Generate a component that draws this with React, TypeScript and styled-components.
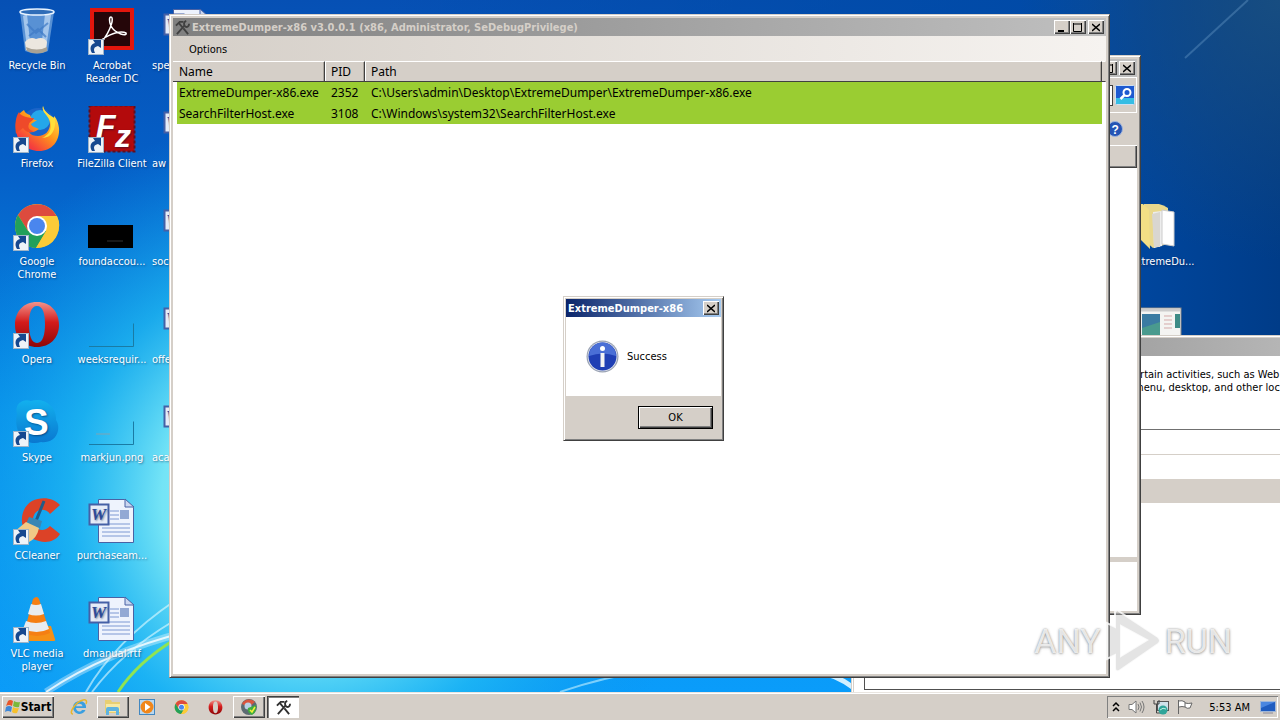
import React from 'react';
import styled, { createGlobalStyle, css } from 'styled-components';

const face = '#d5cfc8';
const ui = `"DejaVu Sans Condensed", "DejaVu Sans", sans-serif`;
const listFont = `"Noto Sans", "Open Sans", sans-serif`;

const GlobalStyle = createGlobalStyle`
  *, *::before, *::after { box-sizing: border-box; }
  body { margin: 0; font: 11px/13px ${ui}; color: #000; background: #0a62c4; }
  button { font: inherit; color: inherit; padding: 0; border: 0; background: none; }
  h1, h2, p { margin: 0; font: inherit; }
`;

const raised = css`
  background: ${face};
  box-shadow: inset 1px 1px #fff, inset -1px -1px #404040, inset -2px -2px #808080;
`;
const sunken = css`
  box-shadow: inset 1px 1px #808080, inset -1px -1px #fff;
`;

const Screen = styled.div`
  display: flex;
  flex-direction: column;
  height: 100vh;
  min-height: 480px;
  overflow: hidden;
  position: relative;
`;
const Desktop = styled.main`
  flex: 1;
  position: relative;
  overflow: hidden;
`;
const Wallpaper = styled.svg`
  position: absolute;
  inset: 0;
  width: 100%;
  height: 100%;
`;
const IconGrid = styled.div`
  position: relative;
  display: grid;
  grid-template-columns: repeat(17, 74px);
  grid-template-rows: repeat(7, 98px);
  column-gap: 1px;
  padding-top: 8px;
`;
const Shortcut = styled.button<{ $col: number; $row: number; $clipped?: boolean }>`
  grid-column: ${p => p.$col};
  grid-row: ${p => p.$row};
  display: flex;
  flex-direction: column;
  align-items: center;
  gap: 3px;
  color: #fff;
  text-shadow: 1px 1px 2px rgba(0, 20, 60, 0.5);
  span {
    max-width: 74px;
    ${p => p.$clipped && 'width: 70px; text-align: left;'}
  }
  svg { display: block; flex: none; }
`;

const Win = styled.section<{ $x: number; $y: number; $w: number; $h: number }>`
  position: absolute;
  left: ${p => p.$x}px;
  right: auto;
  top: ${p => p.$y}px;
  width: ${p => p.$w}px;
  height: ${p => p.$h}px;
  margin: 0;
  display: flex;
  flex-direction: column;
  background: ${face};
  border: 1px solid;
  border-color: ${face} #404040 #404040 ${face};
  box-shadow: inset 1px 1px #fff, inset -1px -1px #808080;
`;
const MainWin = styled(Win)`padding: 3px;`;
const DialogWin = styled(Win)`padding: 2px;`;
const TitleBar = styled.header<{ $active?: boolean }>`
  display: flex;
  align-items: center;
  flex: none;
  height: 18px;
  padding: 0 2px;
  gap: 2px;
  font-weight: bold;
  white-space: nowrap;
  color: ${p => (p.$active ? '#fff' : face)};
  background: linear-gradient(90deg, ${p => (p.$active ? '#0a246a, #a6caf0' : '#808080, #c0c0c0')});
  h1 { flex: 1; font-weight: bold; }
`;
const TitleButtons = styled.div`display: flex;`;
const TitleButton = styled.button<{ $gap?: boolean }>`
  ${raised}
  width: 16px;
  height: 14px;
  margin-left: ${p => (p.$gap ? 2 : 0)}px;
  svg { display: block; margin: 2px auto; }
`;
const MenuBar = styled.nav`
  display: flex;
  align-items: center;
  flex: none;
  height: 25px;
  padding: 2px 16px 0;
  background: linear-gradient(90deg, ${face}, #f6f3f0);
`;
const ListArea = styled.div`
  flex: 1;
  background: #fff;
`;
const ProcessTable = styled.table`
  width: 100%;
  table-layout: fixed;
  border-spacing: 0;
  font: 12px/19px ${listFont};
  white-space: nowrap;
  th {
    height: 21px;
    padding: 0 6px;
    text-align: left;
    font-weight: normal;
    background: ${face};
    border: 1px solid;
    border-color: #fff #404040 #404040 #fff;
    border-left-width: 0;
  }
  th:first-child { box-shadow: inset -1px 0 #aaa49c; }
  th:nth-child(n + 2) { box-shadow: inset 1px 0 #fff, inset -1px 0 #aaa49c; }
  th:last-child { padding: 0; border-right-color: ${face}; box-shadow: none; }
  td {
    height: 21px;
    padding: 0 6px;
    background: #9acd32;
  }
  td:first-child { padding-left: 2px; border-left: 4px solid #fff; }
  td:last-child { background: #fff; padding: 0; }
`;

const MessageBody = styled.div`
  display: flex;
  align-items: center;
  gap: 8px;
  flex: 1;
  padding: 0 20px;
  background: #fff;
`;
const ButtonRow = styled.footer`
  display: flex;
  justify-content: flex-end;
  padding: 10px 8px 9px;
`;
const OkButton = styled.button`
  width: 75px;
  height: 23px;
  background: ${face};
  border: 1px solid #000;
  box-shadow: inset 1px 1px #fff, inset -1px -1px #404040, inset -2px -2px #808080;
`;

const SearchRow = styled.div`
  display: flex;
  justify-content: flex-end;
  align-items: center;
  flex: none;
  height: 36px;
  padding: 0 1px;
  gap: 2px;
  border: 1px solid #fff;
  input { width: 200px; height: 21px; border: 1px solid #404040; background: #fff; }
`;
const SearchButton = styled.button`
  width: 20px;
  height: 20px;
  svg { display: block; }
`;
const CommandRow = styled.div`
  display: flex;
  justify-content: flex-end;
  align-items: center;
  flex: none;
  height: 32px;
  padding: 0 14px;
`;
const ColumnStrip = styled.div`
  ${raised}
  flex: none;
  height: 23px;
`;
const FilePane = styled.div`
  flex: 1;
  background: #fff;
`;
const DetailsPane = styled.div`
  flex: none;
  height: 54px;
  border-top: 5px solid ${face};
  background: #fff;
`;

const SheetText = styled.p`
  flex: none;
  height: 74px;
  padding: 12px 8px 0 280px;
  white-space: nowrap;
  background: #fff;
  border-bottom: 1px solid #707070;
`;
const SheetRow = styled.div`
  flex: none;
  height: 25px;
  background: #fff;
  border-bottom: 1px solid ${face};
`;
const SheetBand = styled.div`
  flex: none;
  height: 22px;
  background: ${face};
`;
const SheetList = styled.div`
  flex: none;
  height: 190px;
  padding: 0 0 2px 10px;
  background: #fff;
  div { height: 100%; border: 1px solid #505050; border-top-color: ${face}; }
`;

const Watermark = styled.div`
  position: absolute;
  right: 48px;
  bottom: 47px;
  display: flex;
  align-items: center;
  gap: 4px;
  pointer-events: none;
  font: 34px/64px Roboto, "DejaVu Sans Condensed", sans-serif;
  color: rgba(255, 255, 255, 0.8);
  text-shadow: 0 0 2px rgba(90, 90, 90, 0.6), 0 1px 3px rgba(90, 90, 90, 0.4);
  svg { display: block; }
`;

const Taskbar = styled.footer`
  position: relative;
  display: flex;
  align-items: center;
  flex: none;
  height: 28px;
  padding: 2px 2px 0;
  background: ${face};
  box-shadow: inset 0 1px #e9e5e0, inset 0 2px #fff;
`;
const StartButton = styled.button`
  ${raised}
  display: flex;
  align-items: center;
  justify-content: center;
  width: 52px;
  height: 22px;
  font-size: 12px;
  font-weight: bold;
`;
const TaskButtons = styled.div`
  display: flex;
  flex: 1;
  gap: 2px;
  padding-left: 9px;
`;
const TaskButton = styled.button<{ $state?: 'open' | 'active' }>`
  display: flex;
  align-items: center;
  justify-content: center;
  width: 32px;
  height: 22px;
  ${p => p.$state === 'open' && raised}
  ${p => p.$state === 'active' && css`
    background: #fff;
    box-shadow: inset 1px 1px #404040, inset 2px 2px #808080, inset -1px -1px #fff;
  `}
`;
const Tray = styled.div`
  ${sunken}
  display: flex;
  align-items: center;
  height: 22px;
  padding: 0 2px 0 5px;
  gap: 8px;
  svg { display: block; }
  time { margin: 0 2px 0 8px; }
`;

/* ---------- icons ---------- */

const Badge = () => (
  <g>
    <rect x="0.5" y="31.5" width="15" height="15" fill="#eef3f8" stroke="#9fb4c8" />
    <path d="M4 45c-3-5-1-9 3-10l-2-3h8v8l-3-2c-4 1-5 3-3 7z" fill="#16488f" />
  </g>
);
const Ico = ({ children, badge }: { children?: React.ReactNode; badge?: boolean }) => (
  <svg width="48" height="48" viewBox="0 0 48 48" aria-hidden="true">
    {children}
    {badge && <Badge />}
  </svg>
);
const BinIcon = () => (
  <Ico>
    <path d="M7 4 12 43q12 5 23 0L41 4z" fill="#9cc4ec" opacity=".55" />
    <path d="M10 8 14 40l4 2-4-36zM38 7l-5 33-5 2 4-36z" fill="#e4f2ff" opacity=".55" />
    <path d="m14 16 9 9 12-10M16 28l9-7 8 8" stroke="#3d79c4" fill="none" opacity=".7" strokeWidth="2" />
    <path d="M12 34q5-6 11-3 8-3 11 3l-1 8q-10 5-20 0z" fill="#ece7df" />
    <path d="M13 39q11 5 21 0v4q-10 5-20 0z" fill="#a9a294" />
    <ellipse cx="24" cy="4" rx="17" ry="3" fill="#2f6db8" stroke="#e9f4ff" strokeWidth="1.5" />
  </Ico>
);
const AcrobatIcon = () => (
  <Ico badge>
    <rect x="2" y="0" width="44" height="42" fill="#e2160d" />
    <rect x="6" y="4" width="36" height="34" fill="#250609" />
    <path d="M12 36c-2-5 19-15 26-11 2 4-11 1-15-7-2-5-2-9 0-9 3 0 1 12-10 26z" fill="none" stroke="#fff" strokeWidth="1.5" />
  </Ico>
);
const FirefoxIcon = () => (
  <Ico badge>
    <defs>
      <linearGradient id="fx" x1="0.9" y1="0" x2="0.1" y2="1">
        <stop offset="0" stopColor="#fff25a" /><stop offset=".45" stopColor="#ff9a1a" />
        <stop offset=".8" stopColor="#f5403c" /><stop offset="1" stopColor="#e12557" />
      </linearGradient>
    </defs>
    <circle cx="25" cy="19" r="17" fill="#1b64c8" />
    <circle cx="27" cy="14" r="10" fill="#24a7ea" />
    <path d="M30 0c-2 7 7 9 7 18 0 7-5 12-12 12-4 0-7-1-9-4 4 1 7-1 10-3-3-2-6-1-8-5l6-4c-3 0-6-1-7-5-3-1-5-2-6-5C4 8 2 15 3 24c1 12 11 21 23 21 13 0 21-10 20-23-1-7-3-10-5-12v6C39 9 31 7 30 0z" fill="url(#fx)" />
    <path d="M6 6c1 3 4 4 7 5l5 1h3c-1 3-5 4-5 6-2 4 1 7 5 7-5 3-9 0-11-3-2 2-5 3-7 6-1-8-1-16 3-22z" fill="#ee4a2a" />
    <path d="M30 0c-2 7 8 10 8 19 0 7-4 11-9 13 10 0 14-9 13-19-3-4-11-5-12-13z" fill="#ffe03a" />
  </Ico>
);
const FileZillaIcon = () => (
  <Ico badge>
    <rect x="1.5" y="-0.5" width="45" height="46" fill="#b30a0c" stroke="#5f1020" strokeWidth="2" strokeDasharray="3 2" />
    <text x="8" y="31" fontFamily="Liberation Sans" fontWeight="bold" fontStyle="italic" fontSize="32" fill="#fff">F</text>
    <text x="27" y="41" fontFamily="Liberation Sans" fontWeight="bold" fontStyle="italic" fontSize="32" fill="#fff">z</text>
  </Ico>
);
const ChromeShape = () => (
  <g>
    <circle cx="24" cy="22" r="22" fill="#fbc932" />
    <path d="M5 11a22 22 0 0 1 38.500 1H24L15 27z" fill="#dd4b3e" />
    <path d="M5 11a22 22 0 0 0 18 33l10-17-18 0z" fill="#22a05a" />
    <path d="M24 12h20q5 10-1 21t-20 11l11-18z" fill="#fbcb38" />
    <circle cx="24" cy="22" r="10" fill="#fff" />
    <circle cx="24" cy="22" r="8" fill="#4a86ee" />
  </g>
);
const ChromeIcon = () => <Ico badge><ChromeShape /></Ico>;
const OperaShape = () => (
  <g>
    <defs>
      <linearGradient id="op" x1="0" y1="0" x2="0" y2="1">
        <stop offset="0" stopColor="#f2938b" /><stop offset=".45" stopColor="#d31b1b" /><stop offset="1" stopColor="#8d0708" />
      </linearGradient>
    </defs>
    <path fillRule="evenodd" d="M24 0C10 0 2 10 2 23s9 22 22 22 22-9 22-22S38 0 24 0zm0 4c6 0 8 8 8 18s-2 19-8 19-8-9-8-19 2-18 8-18z" fill="url(#op)" />
  </g>
);
const OperaIcon = () => <Ico badge><OperaShape /></Ico>;
const SkypeIcon = () => (
  <Ico badge>
    <defs>
      <linearGradient id="sk" x1="0" y1="0" x2="0" y2="1">
        <stop offset="0" stopColor="#12b0ee" /><stop offset="1" stopColor="#0a78d0" />
      </linearGradient>
    </defs>
    <path d="M4 14C1 5 9-2 18 1 30-3 44 6 43 20c6 9 0 24-15 22C12 47 0 32 4 14z" fill="url(#sk)" />
    <text x="11" y="35" fontFamily="Liberation Sans" fontWeight="bold" fontSize="37" fill="#fff">S</text>
  </Ico>
);
const CCleanerIcon = () => (
  <Ico badge>
    <path d="M47 7 37 16C32 9 21 11 20 21s10 15 17 7l10 8c-5 8-14 9-21 7C5 38 4 12 19 3c10-5 22-3 28 4z" fill="#dc4227" />
    <path d="m31 3-8 20" stroke="#225b88" strokeWidth="3" />
    <path d="m16 19 13 4-2 7-14-4z" fill="#3a86b4" />
    <path d="M13 24 1 34l15 10q8-4 10-14z" fill="#f0c987" />
  </Ico>
);
const VlcIcon = () => (
  <Ico badge>
    <path d="m10 31-5 12q0 2 3 2h32q3 0 2-2l-4-13z" fill="#f59016" />
    <path d="M20 3q4-4 6 0l11 34q-13 6-26 0z" fill="#f57f13" />
    <path d="m18 8-3 10q8 3 16 0L28 8q-5 2-10 0zM13 25l-3 8q14 6 26 0l-3-8q-10 4-20 0z" fill="#e9ecef" />
  </Ico>
);
const WordIcon = () => (
  <Ico>
    <path d="M10.500 1.500h26l9 8v35h-35z" fill="#eef3fd" stroke="#4a62a4" />
    <path d="M37 1v8h9z" fill="#cbd7f0" stroke="#4a62a4" />
    <path d="M22 13h9M22 17h9M22 21h9M14 26h28M14 30h28M14 34h28M14 38h28" stroke="#7d98d2" />
    <rect x="32" y="12" width="9" height="9" fill="#93a9d4" />
    <rect x="1.500" y="6.500" width="19" height="20" fill="#e6ecf8" stroke="#4560a6" strokeWidth="2" />
    <text x="3" y="22" fontFamily="Liberation Serif" fontWeight="bold" fontStyle="italic" fontSize="17" fill="#2c4a98">W</text>
  </Ico>
);
const BlackThumb = () => (
  <Ico><rect y="21" width="45" height="23" fill="#000" /><path d="M19 37h16" stroke="#333" /></Ico>
);
const ClearThumb = ({ mark }: { mark?: boolean }) => (
  <Ico>
    <path d="M1 44.500h44.500v-23" fill="none" stroke="#1a7ba4" />
    {mark && <path d="M8 34h14" stroke="#7fa4b4" />}
  </Ico>
);
const FolderIcon = () => (
  <Ico>
    <path d="M6 0q13-3 24 4v36l-15 4-9-8z" fill="#e9d88c" />
    <path d="m15 8 9-1v35l-8 2z" fill="#ededed" />
    <path d="m14 10 8-2v35l-6 0z" fill="#d9d6d0" />
    <path d="m24 6 12 2v34l-12-2z" fill="#fff" stroke="#ccc" />
    <path d="m3-2 8 8 1 39-9-9z" fill="#f3df85" />
  </Ico>
);
const ExeIcon = () => (
  <Ico>
    <rect x="1" y="6" width="42" height="36" fill="#f4f4f2" stroke="#888" />
    <path d="M2 8h40" stroke="#ccc" strokeWidth="3" />
    <rect x="4" y="12" width="18" height="30" fill="#4a9a8e" />
    <path d="M4 12h18v8L4 26z" fill="#3b7ba2" />
    <path d="M26 14h8M26 18h8M26 22h8M26 26h8" stroke="#d4a9a9" />
    <rect x="37" y="12" width="5" height="14" fill="#3d8b86" />
  </Ico>
);

const ToolsIcon = ({ size, color }: { size: number; color: string }) => (
  <svg width={size} height={size} viewBox="0 0 16 16" fill="none" stroke={color} strokeWidth="2" aria-hidden="true">
    <path d="M1 6 5 2h4M4 3l4 5M9 9l5 6M2 15l8-9" />
    <path d="M12 1c-3 1-3 4-1 6 2 1 4 0 4-3" />
  </svg>
);
const MinGlyph = () => <svg width="8" height="9" aria-hidden="true"><path d="M0 8h6" stroke="#000" strokeWidth="2" /></svg>;
const MaxGlyph = () => <svg width="10" height="9" aria-hidden="true"><path d="M.5 0v8.500h8V0M0 1h9" fill="none" stroke="#000" /></svg>;
const CloseGlyph = () => <svg width="8" height="9" aria-hidden="true"><path d="m0 1 8 7m0-7L0 8" stroke="#000" strokeWidth="1.600" /></svg>;

const InfoIcon = () => (
  <svg width="33" height="33" viewBox="0 0 33 33" aria-hidden="true">
    <circle cx="16.500" cy="16.500" r="16" fill="#9aa3b4" />
    <circle cx="16.500" cy="16.500" r="14.800" fill="#e6e9f0" />
    <circle cx="16.500" cy="16.500" r="14" fill="#1f3fb4" />
    <path d="M3 16a13.500 13.500 0 0 1 27 0q-13-5-27 0z" fill="#4a6fd6" />
    <circle cx="16.500" cy="8.500" r="2.500" fill="#fff" />
    <rect x="14.500" y="13" width="4" height="14" fill="#f3f3f3" />
  </svg>
);
const SearchGlyph = () => (
  <svg width="20" height="20" viewBox="0 0 20 20" aria-hidden="true">
    <rect x=".5" y=".5" width="19" height="19" rx="1" fill="#1e5ad0" stroke="#cfe0f2" />
    <path d="M1 13h18v6H1z" fill="#35bde4" />
    <circle cx="12" cy="7.500" r="3.500" fill="none" stroke="#fff" strokeWidth="2" />
    <path d="m9.500 10-4 4" stroke="#fff" strokeWidth="2.500" />
  </svg>
);
const HelpIcon = () => (
  <svg width="16" height="16" viewBox="0 0 16 16" aria-hidden="true">
    <circle cx="8" cy="8" r="7.500" fill="#2454b4" stroke="#9db3dc" />
    <text x="4.500" y="12.500" fontFamily="Liberation Sans" fontWeight="bold" fontSize="12" fill="#fff">?</text>
  </svg>
);

const FlagLogo = () => (
  <svg width="16" height="16" viewBox="0 0 16 16" aria-hidden="true">
    <path d="M3 2q2-2 5 0L7 7Q4 5 1 7z" fill="#e8562a" />
    <path d="M9 2q3 2 6 1l-1 5q-3 1-6-1z" fill="#7ab83a" />
    <path d="M1 8q3-2 6 0l-1 5q-3-2-6 0z" fill="#3f88d8" />
    <path d="M8 8q3 2 6 1l-2 5q-3 1-5-1z" fill="#f6c02c" />
  </svg>
);
const IeIcon = () => (
  <svg width="18" height="18" viewBox="0 0 18 18" aria-hidden="true">
    <path fillRule="evenodd" d="M9.500 3a6.500 6.500 0 1 0 6 9h-3.500c-2 3-6 1-6-2h10C16.500 6 14 3 9.500 3zM6 8.300c1-3.300 6-3.300 6.500 0z" fill="#3a9fe0" />
    <path d="M3 16C-2 16 5 4 13 2c4-1 4 2 3 4" fill="none" stroke="#e8b62c" strokeWidth="1.500" />
  </svg>
);
const ExplorerIcon = () => (
  <svg width="18" height="18" viewBox="0 0 18 18" aria-hidden="true">
    <path d="M1 2h6l1 2h8v11H1z" fill="#e8cf72" />
    <path d="M2 6h14v8H2z" fill="#f7e9a4" />
    <path d="M2 17v-6q0-2 2-2h9q2 0 2 2v6h-3v-4H5v4z" fill="#5fb4e0" />
  </svg>
);
const WmpIcon = () => (
  <svg width="18" height="18" viewBox="0 0 18 18" aria-hidden="true">
    <rect x="1.500" y="1.500" width="15" height="15" fill="#b9d7ef" stroke="#4287c0" />
    <circle cx="9" cy="9" r="6.500" fill="#f0861a" />
    <path d="m7 5 5.500 4L7 13z" fill="#fff" />
  </svg>
);
const DumpIcon = () => (
  <svg width="18" height="18" viewBox="0 0 18 18" aria-hidden="true">
    <circle cx="9" cy="9" r="8" fill="#5c6a72" />
    <path d="M2 6a8 8 0 0 1 13-2L9 9z" fill="#d8553f" />
    <circle cx="8" cy="8" r="3.500" fill="#b8d0e6" />
    <path d="m8 10 8-3q1 7-4 10-5-2-4-7z" fill="#3fae3c" />
    <path d="m10 12 2 2 3-5" fill="none" stroke="#f4ef3a" strokeWidth="1.500" />
  </svg>
);
const MiniSvg = ({ children }: { children: React.ReactNode }) => (
  <svg width="15" height="15" viewBox="0 -1 48 48" aria-hidden="true">{children}</svg>
);

const desktopIcons: { name: string; col: number; row: number; icon: React.ReactNode; clipped?: boolean }[] = [
  { name: 'Recycle Bin', col: 1, row: 1, icon: <BinIcon /> },
  { name: 'Firefox', col: 1, row: 2, icon: <FirefoxIcon /> },
  { name: 'Google Chrome', col: 1, row: 3, icon: <ChromeIcon /> },
  { name: 'Opera', col: 1, row: 4, icon: <OperaIcon /> },
  { name: 'Skype', col: 1, row: 5, icon: <SkypeIcon /> },
  { name: 'CCleaner', col: 1, row: 6, icon: <CCleanerIcon /> },
  { name: 'VLC media player', col: 1, row: 7, icon: <VlcIcon /> },
  { name: 'Acrobat Reader DC', col: 2, row: 1, icon: <AcrobatIcon /> },
  { name: 'FileZilla Client', col: 2, row: 2, icon: <FileZillaIcon /> },
  { name: 'foundaccou...', col: 2, row: 3, icon: <BlackThumb /> },
  { name: 'weeksrequir...', col: 2, row: 4, icon: <ClearThumb /> },
  { name: 'markjun.png', col: 2, row: 5, icon: <ClearThumb mark /> },
  { name: 'purchaseam...', col: 2, row: 6, icon: <WordIcon /> },
  { name: 'dmanual.rtf', col: 2, row: 7, icon: <WordIcon /> },
  { name: 'spe', col: 3, row: 1, icon: <WordIcon />, clipped: true },
  { name: 'aw', col: 3, row: 2, icon: <WordIcon />, clipped: true },
  { name: 'soc', col: 3, row: 3, icon: <WordIcon />, clipped: true },
  { name: 'offe', col: 3, row: 4, icon: <WordIcon />, clipped: true },
  { name: 'aca', col: 3, row: 5, icon: <WordIcon />, clipped: true },
  { name: 'ExtremeDu...', col: 16, row: 3, icon: <FolderIcon /> },
  { name: '', col: 16, row: 4, icon: <ExeIcon /> },
];

const processes = [
  { name: 'ExtremeDumper-x86.exe', pid: 2352, path: 'C:\\Users\\admin\\Desktop\\ExtremeDumper\\ExtremeDumper-x86.exe' },
  { name: 'SearchFilterHost.exe', pid: 3108, path: 'C:\\Windows\\system32\\SearchFilterHost.exe' },
];

const WindowControls = () => (
  <TitleButtons>
    <TitleButton aria-label="Minimize"><MinGlyph /></TitleButton>
    <TitleButton aria-label="Maximize"><MaxGlyph /></TitleButton>
    <TitleButton aria-label="Close" $gap><CloseGlyph /></TitleButton>
  </TitleButtons>
);

const WallpaperArt = () => (
  <Wallpaper viewBox="0 0 1280 692" preserveAspectRatio="none" aria-hidden="true">
    <defs>
      <linearGradient id="sky" x1="0" y1="0" x2="0" y2="1">
        <stop offset="0" stopColor="#0650b4" /><stop offset=".25" stopColor="#0560c8" />
        <stop offset=".6" stopColor="#0690ea" /><stop offset="1" stopColor="#0a9cfa" />
      </linearGradient>
      <radialGradient id="glow" gradientUnits="userSpaceOnUse" cx="310" cy="500" r="390">
        <stop offset="0" stopColor="#b4f8fa" /><stop offset=".38" stopColor="#74e4f6" />
        <stop offset=".62" stopColor="#22bcf2" stopOpacity=".7" /><stop offset="1" stopColor="#0a90ea" stopOpacity="0" />
      </radialGradient>
      <linearGradient id="night" x1="0" y1="0" x2="1" y2="0">
        <stop offset=".3" stopColor="#0048a4" stopOpacity="0" /><stop offset=".85" stopColor="#004aa6" />
        <stop offset="1" stopColor="#003c88" />
      </linearGradient>
      <radialGradient id="corner" gradientUnits="userSpaceOnUse" cx="1280" cy="0" r="260">
        <stop offset="0" stopColor="#1a4f80" stopOpacity=".9" /><stop offset="1" stopColor="#1a4a7c" stopOpacity="0" />
      </radialGradient>
    </defs>
    <rect width="1280" height="692" fill="url(#sky)" />
    <rect width="1280" height="692" fill="url(#glow)" />
    <rect width="1280" height="600" fill="url(#night)" />
    <rect x="1000" width="280" height="280" fill="url(#corner)" />
    <path d="M1185 58 1248 0" stroke="#6a9cc8" strokeOpacity=".4" strokeWidth="2" />
    <g fill="none">
      <path d="M46 692q60-40 140-60" stroke="#fff" strokeOpacity=".35" strokeWidth="7" />
      <path d="M46 692q60-40 140-60" stroke="#fff" strokeOpacity=".8" strokeWidth="2" />
      <path d="M86 692q28-50 90-92M92 692q30-40 80-70" stroke="#e4fbff" strokeOpacity=".6" strokeWidth="2" />
      <path d="M118 692q20-30 56-52" stroke="#90e452" strokeWidth="3" />
      <path d="M560 692q40-14 90-22" stroke="#c8f2ff" strokeOpacity=".6" strokeWidth="2" />
      <path d="M810 670q26 4 44 18" stroke="#e8f8ff" strokeWidth="5" strokeOpacity=".9" />
    </g>
  </Wallpaper>
);

export default function App() {
  return (
    <Screen>
      <GlobalStyle />
      <Desktop>
        <WallpaperArt />
        <IconGrid>
          {desktopIcons.map(i => (
            <Shortcut key={`${i.col}-${i.row}`} $col={i.col} $row={i.row} $clipped={i.clipped}>
              {i.icon}
              <span>{i.name}</span>
            </Shortcut>
          ))}
        </IconGrid>

        <DialogWin $x={851} $y={335} $w={520} $h={380}>
          <TitleBar />
          <SheetText>
            ertain activities, such as Web b
            <br />
            menu, desktop, and other loc
          </SheetText>
          <SheetRow />
          <SheetRow />
          <SheetBand />
          <SheetList><div /></SheetList>
        </DialogWin>

        <MainWin $x={640} $y={55} $w={501} $h={560}>
          <TitleBar><h1 /><WindowControls /></TitleBar>
          <SearchRow>
            <input aria-label="Search" />
            <SearchButton aria-label="Go"><SearchGlyph /></SearchButton>
          </SearchRow>
          <CommandRow><HelpIcon /></CommandRow>
          <ColumnStrip />
          <FilePane />
          <DetailsPane />
        </MainWin>

        <MainWin $x={169} $y={14} $w={941} $h={664}>
          <TitleBar>
            <ToolsIcon size={15} color="#404040" />
            <h1>ExtremeDumper-x86 v3.0.0.1 (x86, Administrator, SeDebugPrivilege)</h1>
            <WindowControls />
          </TitleBar>
          <MenuBar><button>Options</button></MenuBar>
          <ListArea>
            <ProcessTable>
              <colgroup>
                <col style={{ width: 152 }} /><col style={{ width: 40 }} /><col /><col style={{ width: 4 }} />
              </colgroup>
              <thead>
                <tr><th>Name</th><th>PID</th><th>Path</th><th /></tr>
              </thead>
              <tbody>
                {processes.map(p => (
                  <tr key={p.pid}><td>{p.name}</td><td>{p.pid}</td><td>{p.path}</td><td /></tr>
                ))}
              </tbody>
            </ProcessTable>
          </ListArea>
        </MainWin>

        <DialogWin role="dialog" aria-label="ExtremeDumper-x86" $x={563} $y={296} $w={161} $h={145}>
          <TitleBar $active>
            <h1>ExtremeDumper-x86</h1>
            <TitleButton aria-label="Close"><CloseGlyph /></TitleButton>
          </TitleBar>
          <MessageBody><InfoIcon /><p>Success</p></MessageBody>
          <ButtonRow><OkButton>OK</OkButton></ButtonRow>
        </DialogWin>
      </Desktop>

      <Taskbar>
        <StartButton><FlagLogo />Start</StartButton>
        <TaskButtons>
          <TaskButton aria-label="Internet Explorer"><IeIcon /></TaskButton>
          <TaskButton aria-label="Explorer" $state="open"><ExplorerIcon /></TaskButton>
          <TaskButton aria-label="Media Player"><WmpIcon /></TaskButton>
          <TaskButton aria-label="Chrome"><MiniSvg><ChromeShape /></MiniSvg></TaskButton>
          <TaskButton aria-label="Opera"><MiniSvg><OperaShape /></MiniSvg></TaskButton>
          <TaskButton aria-label="Installer" $state="open"><DumpIcon /></TaskButton>
          <TaskButton aria-label="ExtremeDumper" $state="active"><ToolsIcon size={15} color="#303030" /></TaskButton>
        </TaskButtons>
        <Tray>
          <svg width="8" height="12" viewBox="0 0 8 12" fill="none" stroke="#000" strokeWidth="1.500" aria-hidden="true"><path d="m1 5 3-3 3 3M1 10l3-3 3 3" /></svg>
          <svg width="17" height="16" viewBox="0 0 17 16" fill="none" stroke="#777" aria-hidden="true">
            <path d="M1 5.500h3L8 2v12l-4-3.500H1z" fill="#fff" /><path d="M10 5q2 3 0 6M12 3.500q3 4.500 0 9M14 2q4 6 0 12" />
          </svg>
          <svg width="16" height="16" viewBox="0 0 16 16" aria-hidden="true">
            <rect x="4.500" y="2.500" width="11" height="9" fill="#cfe2ea" stroke="#555" />
            <path d="M1 1v4h5V1M3.500 5v9H8" fill="none" stroke="#444" />
            <circle cx="10" cy="11" r="4.500" fill="#2fa59a" /><path d="M7 11q3-3 6-1" stroke="#bff0e0" fill="none" />
          </svg>
          <svg width="16" height="16" viewBox="0 0 16 16" aria-hidden="true">
            <path d="M1.500 1v14M2 2q3-1 6 1v5Q5 7 2 8M8 4q3 1 7 0l-2 5q-3 1-5-1" fill="#fff" stroke="#666" />
          </svg>
          <time>5:53 AM</time>
          <svg width="16" height="14" viewBox="0 0 16 14" aria-hidden="true">
            <rect x=".5" y="1.500" width="15" height="10" fill="#1f5cc0" stroke="#9fb6d8" /><path d="M1 2h14L1 8z" fill="#4a86e0" /><path d="M3 13h10" stroke="#889" />
          </svg>
        </Tray>
      </Taskbar>

      <Watermark aria-hidden="true">
        <span>ANY</span>
        <svg width="56" height="64" viewBox="0 0 56 64">
          <path fillRule="evenodd" d="M12 1 53 28q4 4 0 7L14 62q-4 1-4-3V46L2 50V14l8 4V3zM16 17v30l26-16z" fill="#c4c4c4" fillOpacity=".45" stroke="#fff" strokeOpacity=".8" strokeWidth="2" />
        </svg>
        <span>RUN</span>
      </Watermark>
    </Screen>
  );
}
